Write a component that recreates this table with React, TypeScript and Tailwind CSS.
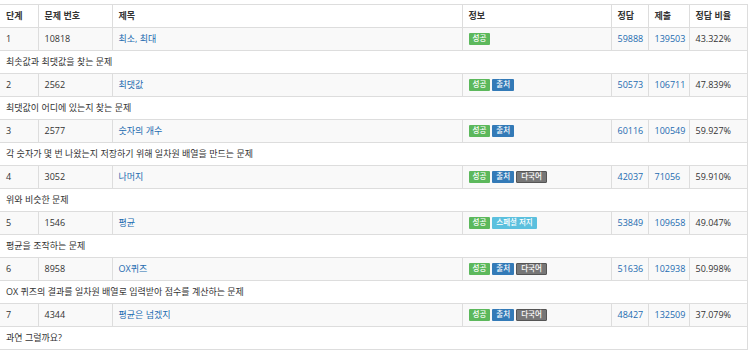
import { Fragment } from "react";

const FONT = "font-['Open_Sans','Noto_Sans_CJK_KR',sans-serif]";

type Tag = "success" | "source" | "multi" | "special";

const TAGS: Record<Tag, { label: string; cls: string }> = {
    success: { label: "성공", cls: "bg-[#5cb85c]" },
    source: { label: "출처", cls: "bg-[#337ab7]" },
    multi: { label: "다국어", cls: "bg-[#777777] border border-[#555]" },
    special: { label: "스페셜 저지", cls: "bg-[#5bc0de]" },
};

const PROBLEMS: { step: number; id: number; title: string; tags: Tag[]; ac: number; sub: number; ratio: string; desc: string }[] = [
    { step: 1, id: 10818, title: "최소, 최대", tags: ["success"], ac: 59888, sub: 139503, ratio: "43.322%", desc: "최솟값과 최댓값을 찾는 문제" },
    { step: 2, id: 2562, title: "최댓값", tags: ["success", "source"], ac: 50573, sub: 106711, ratio: "47.839%", desc: "최댓값이 어디에 있는지 찾는 문제" },
    { step: 3, id: 2577, title: "숫자의 개수", tags: ["success", "source"], ac: 60116, sub: 100549, ratio: "59.927%", desc: "각 숫자가 몇 번 나왔는지 저장하기 위해 일차원 배열을 만드는 문제" },
    { step: 4, id: 3052, title: "나머지", tags: ["success", "source", "multi"], ac: 42037, sub: 71056, ratio: "59.910%", desc: "위와 비슷한 문제" },
    { step: 5, id: 1546, title: "평균", tags: ["success", "special"], ac: 53849, sub: 109658, ratio: "49.047%", desc: "평균을 조작하는 문제" },
    { step: 6, id: 8958, title: "OX퀴즈", tags: ["success", "source", "multi"], ac: 51636, sub: 102938, ratio: "50.998%", desc: "OX 퀴즈의 결과를 일차원 배열로 입력받아 점수를 계산하는 문제" },
    { step: 7, id: 4344, title: "평균은 넘겠지", tags: ["success", "source", "multi"], ac: 48427, sub: 132509, ratio: "37.079%", desc: "과연 그럴까요?" },
];

const cell = "h-[23px] px-[6px] py-0 align-middle border-t border-[#ddd]";
const vcell = `${cell} border-l`;

export default function App() {
    return (
        <div className={`bg-white w-[750px] h-[352px] pt-[4px] text-[9px] text-[#333] ${FONT}`}>
            <table className="table-fixed border-collapse w-[747px] border-r border-b border-[#ddd] text-left">
                <colgroup>
                    <col className="w-[38px]" />
                    <col className="w-[74px]" />
                    <col className="w-[350px]" />
                    <col className="w-[149px]" />
                    <col className="w-[37px]" />
                    <col className="w-[41px]" />
                    <col className="w-[58px]" />
                </colgroup>
                <thead>
                    <tr className="font-bold">
                        <th className={cell}>단계</th>
                        <th className={vcell}>문제 번호</th>
                        <th className={vcell}>제목</th>
                        <th className={vcell}>정보</th>
                        <th className={vcell}>정답</th>
                        <th className={vcell}>제출</th>
                        <th className={vcell}>정답 비율</th>
                    </tr>
                </thead>
                <tbody>
                    {PROBLEMS.map((p) => (
                        <Fragment key={p.id}>
                            <tr className="bg-[#f9f9f9]">
                                <td className={cell}>{p.step}</td>
                                <td className={vcell}>{p.id}</td>
                                <td className={`${vcell} text-[#236bb0]`}>{p.title}</td>
                                <td className={vcell}>
                                    <div className="flex items-center gap-[2px]">
                                        {p.tags.map((t) => (
                                            <span
                                                key={t}
                                                className={`inline-flex items-center h-[12px] px-[4px] rounded-[1px] text-white text-[7.5px] font-medium leading-none ${TAGS[t].cls}`}
                                            >
                                                {TAGS[t].label}
                                            </span>
                                        ))}
                                    </div>
                                </td>
                                <td className={`${vcell} text-[#236bb0]`}>{p.ac}</td>
                                <td className={`${vcell} text-[#236bb0]`}>{p.sub}</td>
                                <td className={vcell}>{p.ratio}</td>
                            </tr>
                            <tr className="bg-white">
                                <td colSpan={7} className={cell}>
                                    {p.desc}
                                </td>
                            </tr>
                        </Fragment>
                    ))}
                </tbody>
            </table>
        </div>
    );
}
